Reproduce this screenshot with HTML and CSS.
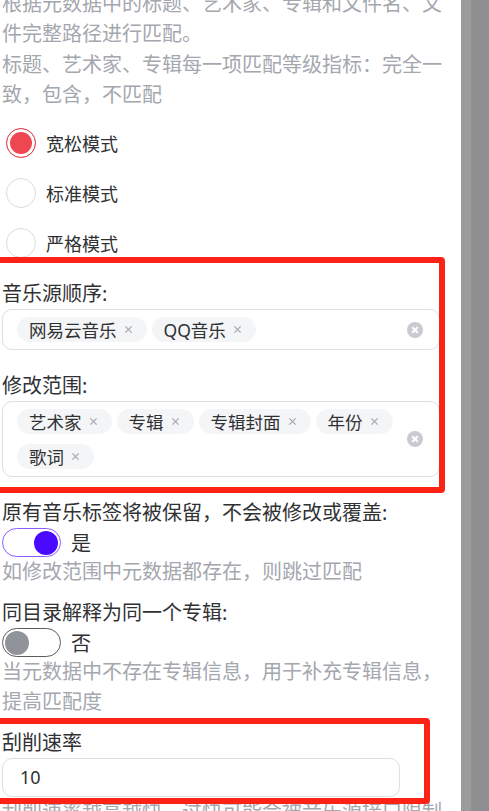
FILE: index.html
```html
<!DOCTYPE html>
<html lang="zh-CN">
<head>
    <meta charset="UTF-8">
    <meta name="viewport" content="width=device-width, initial-scale=1.0">
    <title>匹配设置</title>
    <link rel="stylesheet" href="styles.css">
</head>
<body>
    <div class="page">
        <div class="main">
            <div class="form">
                <p class="desc">根据元数据中的标题、艺术家、专辑和文件名、文件完整路径进行匹配。</p>
                <p class="desc desc-next">标题、艺术家、专辑每一项匹配等级指标：完全一致，包含，不匹配</p>

                <div class="radios">
                    <label class="radio checked"><span class="circle"></span>宽松模式</label>
                    <label class="radio"><span class="circle"></span>标准模式</label>
                    <label class="radio"><span class="circle"></span>严格模式</label>
                </div>

                <div class="field">
                    <div class="label">音乐源顺序:</div>
                    <div class="select">
                        <div class="tags">
                            <span class="tag">网易云音乐<svg class="tag-x" viewBox="0 0 10 10"><path d="M1.5 1.5l7 7M8.5 1.5l-7 7"/></svg></span>
                            <span class="tag">QQ音乐<svg class="tag-x" viewBox="0 0 10 10"><path d="M1.5 1.5l7 7M8.5 1.5l-7 7"/></svg></span>
                        </div>
                        <span class="clear"><svg viewBox="0 0 16 16"><path d="M5.2 5.2l5.6 5.6M10.8 5.2l-5.6 5.6"/></svg></span>
                    </div>
                </div>

                <div class="field">
                    <div class="label">修改范围:</div>
                    <div class="select">
                        <div class="tags">
                            <span class="tag">艺术家<svg class="tag-x" viewBox="0 0 10 10"><path d="M1.5 1.5l7 7M8.5 1.5l-7 7"/></svg></span>
                            <span class="tag">专辑<svg class="tag-x" viewBox="0 0 10 10"><path d="M1.5 1.5l7 7M8.5 1.5l-7 7"/></svg></span>
                            <span class="tag">专辑封面<svg class="tag-x" viewBox="0 0 10 10"><path d="M1.5 1.5l7 7M8.5 1.5l-7 7"/></svg></span>
                            <span class="tag">年份<svg class="tag-x" viewBox="0 0 10 10"><path d="M1.5 1.5l7 7M8.5 1.5l-7 7"/></svg></span>
                            <span class="tag">歌词<svg class="tag-x" viewBox="0 0 10 10"><path d="M1.5 1.5l7 7M8.5 1.5l-7 7"/></svg></span>
                        </div>
                        <span class="clear"><svg viewBox="0 0 16 16"><path d="M5.2 5.2l5.6 5.6M10.8 5.2l-5.6 5.6"/></svg></span>
                    </div>
                </div>

                <div class="field">
                    <div class="label">原有音乐标签将被保留，不会被修改或覆盖:</div>
                    <div class="switch-row">
                        <span class="switch on"><span class="knob"></span></span>
                        <span class="switch-text">是</span>
                    </div>
                    <p class="desc">如修改范围中元数据都存在，则跳过匹配</p>
                </div>

                <div class="field field-tight">
                    <div class="label">同目录解释为同一个专辑:</div>
                    <div class="switch-row">
                        <span class="switch"><span class="knob"></span></span>
                        <span class="switch-text">否</span>
                    </div>
                    <p class="desc">当元数据中不存在专辑信息，用于补充专辑信息，提高匹配度</p>
                </div>

                <div class="field field-tight">
                    <div class="label">刮削速率</div>
                    <div class="input">10</div>
                    <p class="desc">刮削速率越高越快，过快可能会被音乐源接口限制请求频率</p>
                </div>
            </div>

            <div class="mark mark-top"></div>
            <div class="mark mark-bottom"></div>
        </div>
        <div class="scrollbar"></div>
    </div>
</body>
</html>
```

FILE: styles.css
```css
html, body {
    margin: 0;
    height: 811px;
    overflow: hidden;
    background: #fff;
}
body {
    font-family: "Noto Sans", "Noto Sans CJK SC", sans-serif;
    color: #303133;
}
.page {
    display: flex;
    height: 811px;
}
.main {
    position: relative;
    width: 461px;
    overflow: hidden;
}
.scrollbar {
    width: 28px;
    background: linear-gradient(to right, #9b9b9b 0, #9b9b9b 10px, #8f8f91 10px);
}
.form {
    width: 442px;
    margin-top: -11px;
    padding-left: 2px;
}
.desc {
    margin: 0;
    font-size: 20px;
    line-height: 30px;
    color: #a4a7ae;
}
.desc-next {
    margin-top: 1px;
}

/* radios */
.radios {
    display: flex;
    flex-direction: column;
    gap: 20px;
    margin-top: 18px;
    padding-left: 4px;
}
.radio {
    display: flex;
    align-items: center;
    gap: 10px;
    height: 30px;
    font-size: 18px;
    color: #303133;
}
.circle {
    width: 28px;
    height: 28px;
    border: 1px solid #dcdcdc;
    border-radius: 50%;
    box-sizing: content-box;
}
.radio.checked .circle {
    border-color: #e0464f;
    background: #ef4750;
    box-shadow: inset 0 0 0 3px #fff;
}

/* fields */
.field {
    margin-top: 21px;
}
.field-tight {
    margin-top: 11px;
}
.label {
    font-size: 20px;
    line-height: 30px;
    color: #303133;
}
.select {
    display: flex;
    align-items: center;
    margin-right: 4px;
    padding: 7px 16px 7px 14px;
    border: 1px solid #dcdfe6;
    border-radius: 10px;
}
.tags {
    flex: 1;
    display: flex;
    flex-wrap: wrap;
    column-gap: 5px;
    row-gap: 10px;
}
.tag {
    display: inline-flex;
    align-items: center;
    gap: 7px;
    height: 25px;
    padding: 0 14px 0 12px;
    border-radius: 13px;
    background: #f4f5f7;
    font-size: 17.5px;
    color: #303133;
}
.tag-x {
    width: 9px;
    height: 9px;
    fill: none;
    stroke: #a6a9b0;
    stroke-width: 1.4;
}
.clear {
    display: flex;
    width: 16px;
    height: 16px;
    border-radius: 50%;
    background: #c9cbd0;
}
.clear svg {
    width: 16px;
    height: 16px;
    fill: none;
    stroke: #fff;
    stroke-width: 2;
}

/* switches */
.switch-row {
    display: flex;
    align-items: center;
    gap: 10px;
    height: 29px;
}
.switch {
    display: flex;
    align-items: center;
    width: 59px;
    height: 29px;
    padding: 0 2px;
    box-sizing: border-box;
    border: 1px solid #5c5c5f;
    border-radius: 15px;
}
.switch.on {
    justify-content: flex-end;
    border-color: #8b5cff;
}
.knob {
    width: 24px;
    height: 24px;
    border-radius: 50%;
    background: #909399;
}
.switch.on .knob {
    background: #4a0aff;
}
.switch-text {
    font-size: 20px;
    color: #303133;
}

.input {
    width: 398px;
    height: 39px;
    box-sizing: border-box;
    padding-left: 17px;
    border: 1px solid #dcdfe6;
    border-radius: 10px;
    font-size: 18px;
    line-height: 37px;
    color: #303133;
}

/* red annotation frames */
.mark {
    position: absolute;
    left: -10px;
    border: 6px solid #fd2216;
    border-radius: 4px;
    box-sizing: border-box;
}
.mark-top {
    top: 257px;
    width: 455px;
    height: 236px;
}
.mark-bottom {
    top: 718px;
    width: 440px;
    height: 86px;
}
```
